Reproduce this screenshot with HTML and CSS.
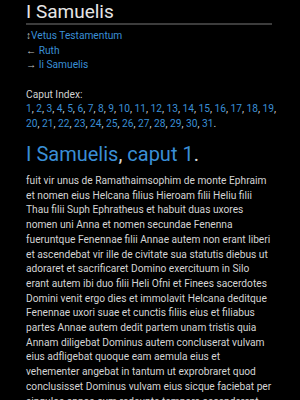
FILE: index.html
```html
<!DOCTYPE html>
<html lang="la">

<head>
    <meta charset="UTF-8">
    <meta name="viewport" content="width=device-width, initial-scale=1.0">
    <title>I Samuelis</title>
    <link rel="stylesheet" href="styles.css">
</head>

<body>
    <div class="page">
        <h1 class="title">I Samuelis</h1>
        <ul class="nav">
            <li><span class="arrow">↕</span><a href="">Vetus Testamentum</a></li>
            <li><span class="arrow">←</span> <a href="">Ruth</a></li>
            <li><span class="arrow">→</span> <a href="">Ii Samuelis</a></li>
        </ul>
        <div class="index">
            <p class="label">Caput Index:</p>
            <p class="chapters">
                <a href="">1</a>, <a href="">2</a>, <a href="">3</a>, <a href="">4</a>, <a href="">5</a>, <a href="">6</a>, <a href="">7</a>, <a href="">8</a>, <a href="">9</a>, <a href="">10</a>, <a href="">11</a>, <a href="">12</a>, <a href="">13</a>, <a href="">14</a>, <a href="">15</a>, <a href="">16</a>, <a href="">17</a>, <a href="">18</a>, <a href="">19</a>,
                <a href="">20</a>, <a href="">21</a>, <a href="">22</a>, <a href="">23</a>, <a href="">24</a>, <a href="">25</a>, <a href="">26</a>, <a href="">27</a>, <a href="">28</a>, <a href="">29</a>, <a href="">30</a>, <a href="">31</a><span class="dot">.</span>
            </p>
        </div>
        <h2 class="chapter"><a href="">I Samuelis</a>, <a href="">caput 1</a><span class="dot">.</span></h2>
        <p class="text">fuit vir unus de Ramathaimsophim de monte Ephraim et nomen eius Helcana filius Hieroam filii Heliu filii Thau filii Suph Ephratheus et habuit duas uxores nomen uni Anna et nomen secundae Fenenna fueruntque Fenennae filii Annae autem non erant liberi et ascendebat vir ille de civitate sua statutis diebus ut adoraret et sacrificaret Domino exercituum in Silo erant autem ibi duo filii Heli Ofni et Finees sacerdotes Domini venit ergo dies et immolavit Helcana deditque Fenennae uxori suae et cunctis filiis eius et filiabus partes Annae autem dedit partem unam tristis quia Annam diligebat Dominus autem concluserat vulvam eius adfligebat quoque eam aemula eius et vehementer angebat in tantum ut exprobraret quod conclusisset Dominus vulvam eius sicque faciebat per singulos annos cum redeunte tempore ascenderent</p>
    </div>
</body>

</html>
```

FILE: styles.css
```css
body {
    margin: 0;
    background-color: #000;
    color: #d8d8d8;
    font-family: Roboto, "Liberation Sans", sans-serif;
}

a {
    color: #3a8fd6;
    text-decoration: none;
}

.page {
    padding: 0 28px 0 26px;
}

.title {
    margin: 0;
    padding-top: 1px;
    font-size: 19px;
    font-weight: 400;
    line-height: 22px;
    color: #e6e6e6;
    border-bottom: 2px solid #3c3c3c;
}

.nav {
    margin: 4px 0 0;
    padding: 0;
    list-style: none;
    font-size: 10.2px;
    line-height: 14.5px;
}

.nav .arrow {
    color: #bbb;
}

.index {
    margin-top: 15px;
    font-size: 10.2px;
    line-height: 14.5px;
}

.index p {
    margin: 0;
}

.index .chapters {
    margin-right: -8px;
}

.label {
    color: #d0d0d0;
}

.dot {
    color: #ddd;
}

.chapter {
    margin: 11px 0 0;
    font-size: 20px;
    font-weight: 400;
    line-height: 24px;
}

.text {
    margin: 8px 0 0;
    font-size: 10.2px;
    line-height: 14.7px;
    color: #d4d4d4;
}
```
